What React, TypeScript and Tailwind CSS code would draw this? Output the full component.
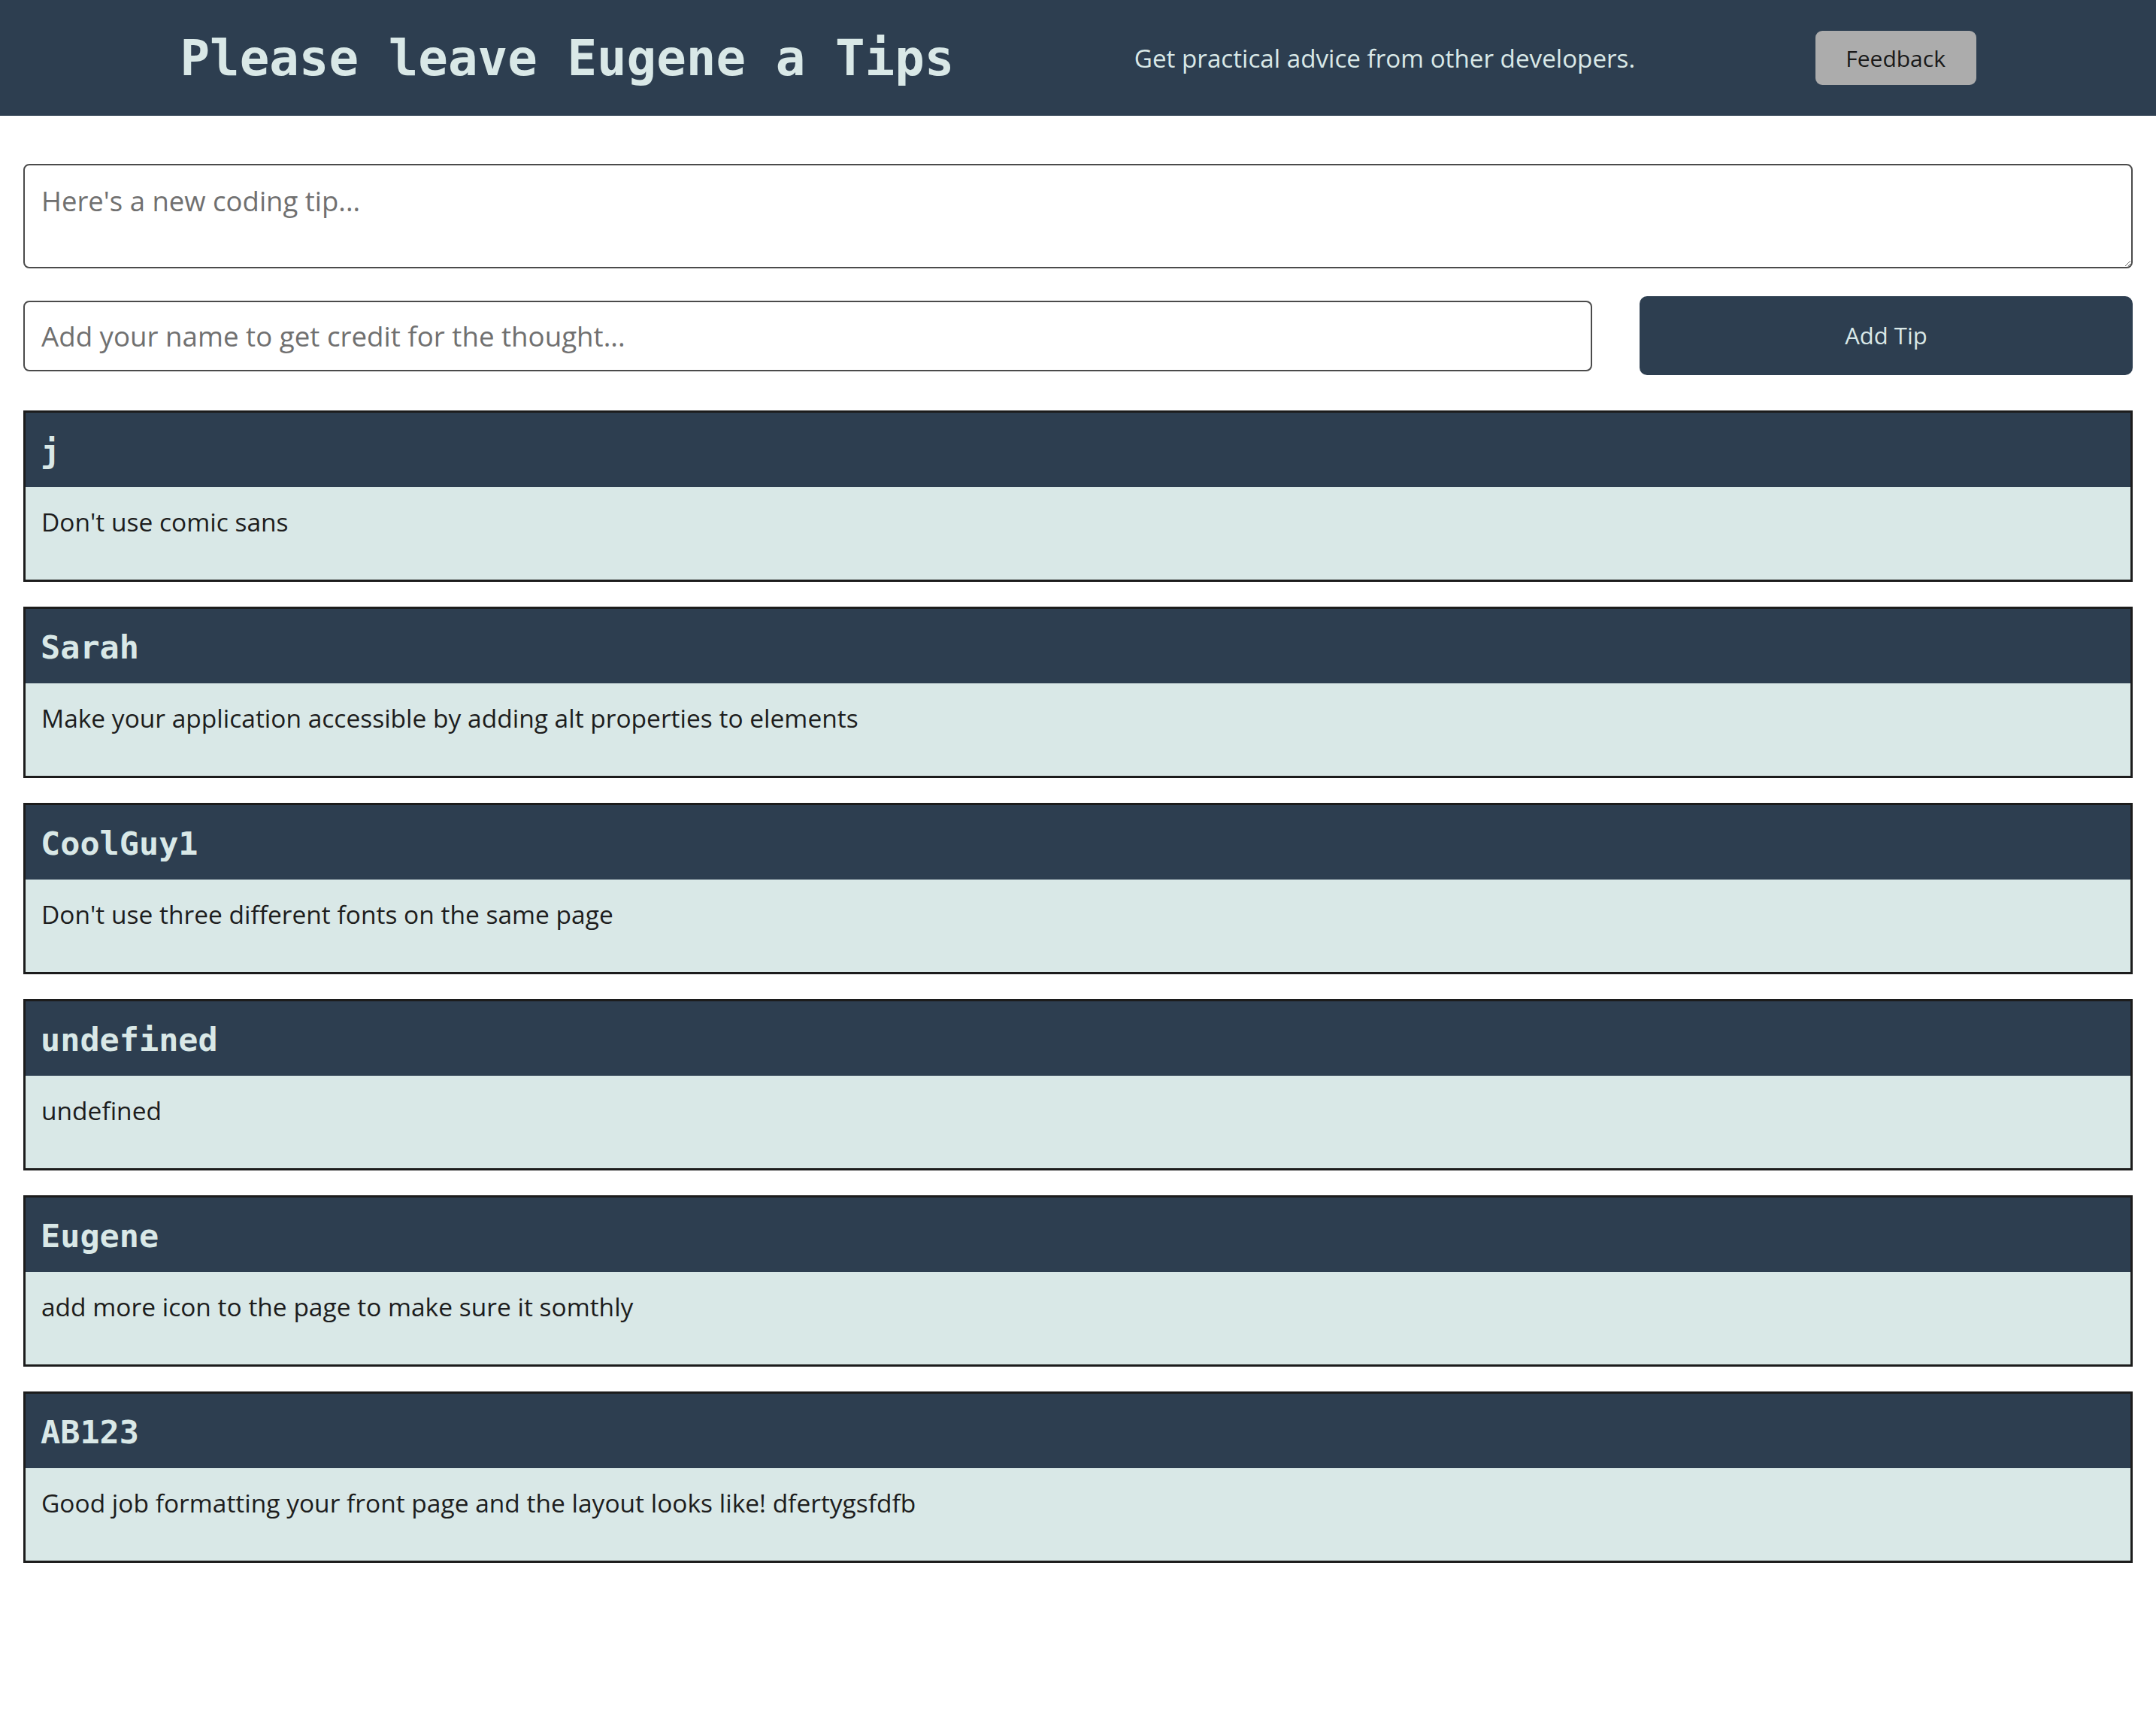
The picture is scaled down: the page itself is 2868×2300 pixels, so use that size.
import { useState } from 'react'

interface Tip {
  id: number
  name: string
  text: string
}

const initialTips: Tip[] = [
  { id: 1, name: 'j', text: "Don't use comic sans" },
  { id: 2, name: 'Sarah', text: 'Make your application accessible by adding alt properties to elements' },
  { id: 3, name: 'CoolGuy1', text: "Don't use three different fonts on the same page" },
  { id: 4, name: 'undefined', text: 'undefined' },
  { id: 5, name: 'Eugene', text: 'add more icon to the page to make sure it somthly' },
  { id: 6, name: 'AB123', text: 'Good job formatting your front page and the layout looks like! dfertygsfdfb' },
]

function TipCard({ tip }: { tip: Tip }) {
  return (
    <div className="border-[3px] border-[#1c1c1c]">
      <div className="bg-[#2d3e50] px-[20px] pt-[26px] pb-[23px]">
        <h3 className="font-['DejaVu_Sans_Mono',monospace] font-bold text-[43.5px] leading-[50px] text-[#d9e8e7]">
          {tip.name}
        </h3>
      </div>
      <div className="bg-[#d9e8e7] px-[21px] pt-[24px] pb-[54px]">
        <p className="text-[33.5px] leading-[45px] text-[#1d1d1d]">{tip.text}</p>
      </div>
    </div>
  )
}

export default function App() {
  const [tips] = useState<Tip[]>(initialTips)
  const [tipText, setTipText] = useState('')
  const [name, setName] = useState('')

  return (
    <div className="min-h-screen bg-white font-['Open_Sans',sans-serif]">
      <header className="h-[154px] bg-[#2d3e50] flex items-center justify-evenly">
        <h1 className="font-['DejaVu_Sans_Mono',monospace] font-bold text-[65.8px] leading-[77px] text-[#d9e8e7]">
          Please leave Eugene a Tips
        </h1>
        <p className="text-[33.2px] leading-[45px] text-[#d9e8e7]">Get practical advice from other developers.</p>
        <button className="w-[214px] h-[72px] rounded-[9px] bg-[#acacac] text-[30px] text-[#1a1a1a]">Feedback</button>
      </header>

      <main className="px-[31px] pt-[64px] pb-[40px]">
        <textarea
          value={tipText}
          onChange={(e) => setTipText(e.target.value)}
          placeholder="Here's a new coding tip..."
          className="block w-full h-[139px] border-2 border-[#4b4b4b] rounded-[8px] px-[22px] pt-[23px] text-[36.5px] leading-[49px] text-[#1d1d1d] placeholder:text-[#707070] outline-none"
        />

        <div className="mt-[37px] flex items-center gap-[63px]">
          <input
            value={name}
            onChange={(e) => setName(e.target.value)}
            placeholder="Add your name to get credit for the thought..."
            className="flex-1 h-[94px] border-2 border-[#4b4b4b] rounded-[8px] px-[22px] text-[36.7px] text-[#1d1d1d] placeholder:text-[#707070] outline-none"
          />
          <button className="w-[656px] h-[105px] rounded-[10px] bg-[#2d3e50] text-[31px] text-[#d9e8e7]">Add Tip</button>
        </div>

        <div className="mt-[47px] flex flex-col gap-[33px]">
          {tips.map((tip) => (
            <TipCard key={tip.id} tip={tip} />
          ))}
        </div>
      </main>
    </div>
  )
}
